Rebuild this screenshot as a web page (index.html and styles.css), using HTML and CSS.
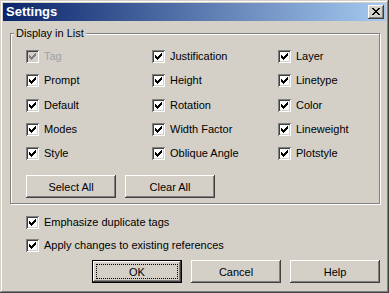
FILE: index.html
```html
<!DOCTYPE html>
<html>
<head>
<meta charset="utf-8">
<link rel="stylesheet" href="styles.css">
</head>
<body>
<div class="window">
  <div class="titlebar">
    <span class="title">Settings</span>
    <button class="close" aria-label="Close"><svg width="8" height="7" viewBox="0 0 8 7" shape-rendering="crispEdges"><path d="M0 0h2v1h-2zM6 0h2v1h-2zM1 1h2v1h-2zM5 1h2v1h-2zM2 2h4v1h-4zM3 3h2v1h-2zM2 4h4v1h-4zM1 5h2v1h-2zM5 5h2v1h-2zM0 6h2v1h-2zM6 6h2v1h-2z" fill="#000"/></svg></button>
  </div>
  <div class="body">
    <div class="group">
      <span class="legend">Display in List</span>
      <div class="grid">
        <label class="cb disabled"><span class="box"><svg class="chk" width="7" height="7" viewBox="0 0 7 7" shape-rendering="crispEdges"><path d="M0 2h1v3h-1zM1 3h1v3h-1zM2 4h1v3h-1zM3 3h1v3h-1zM4 2h1v3h-1zM5 1h1v3h-1zM6 0h1v3h-1z"/></svg></span>Tag</label>
        <label class="cb"><span class="box"><svg class="chk" width="7" height="7" viewBox="0 0 7 7" shape-rendering="crispEdges"><path d="M0 2h1v3h-1zM1 3h1v3h-1zM2 4h1v3h-1zM3 3h1v3h-1zM4 2h1v3h-1zM5 1h1v3h-1zM6 0h1v3h-1z"/></svg></span>Justification</label>
        <label class="cb"><span class="box"><svg class="chk" width="7" height="7" viewBox="0 0 7 7" shape-rendering="crispEdges"><path d="M0 2h1v3h-1zM1 3h1v3h-1zM2 4h1v3h-1zM3 3h1v3h-1zM4 2h1v3h-1zM5 1h1v3h-1zM6 0h1v3h-1z"/></svg></span>Layer</label>
        <label class="cb"><span class="box"><svg class="chk" width="7" height="7" viewBox="0 0 7 7" shape-rendering="crispEdges"><path d="M0 2h1v3h-1zM1 3h1v3h-1zM2 4h1v3h-1zM3 3h1v3h-1zM4 2h1v3h-1zM5 1h1v3h-1zM6 0h1v3h-1z"/></svg></span>Prompt</label>
        <label class="cb"><span class="box"><svg class="chk" width="7" height="7" viewBox="0 0 7 7" shape-rendering="crispEdges"><path d="M0 2h1v3h-1zM1 3h1v3h-1zM2 4h1v3h-1zM3 3h1v3h-1zM4 2h1v3h-1zM5 1h1v3h-1zM6 0h1v3h-1z"/></svg></span>Height</label>
        <label class="cb"><span class="box"><svg class="chk" width="7" height="7" viewBox="0 0 7 7" shape-rendering="crispEdges"><path d="M0 2h1v3h-1zM1 3h1v3h-1zM2 4h1v3h-1zM3 3h1v3h-1zM4 2h1v3h-1zM5 1h1v3h-1zM6 0h1v3h-1z"/></svg></span>Linetype</label>
        <label class="cb"><span class="box"><svg class="chk" width="7" height="7" viewBox="0 0 7 7" shape-rendering="crispEdges"><path d="M0 2h1v3h-1zM1 3h1v3h-1zM2 4h1v3h-1zM3 3h1v3h-1zM4 2h1v3h-1zM5 1h1v3h-1zM6 0h1v3h-1z"/></svg></span>Default</label>
        <label class="cb"><span class="box"><svg class="chk" width="7" height="7" viewBox="0 0 7 7" shape-rendering="crispEdges"><path d="M0 2h1v3h-1zM1 3h1v3h-1zM2 4h1v3h-1zM3 3h1v3h-1zM4 2h1v3h-1zM5 1h1v3h-1zM6 0h1v3h-1z"/></svg></span>Rotation</label>
        <label class="cb"><span class="box"><svg class="chk" width="7" height="7" viewBox="0 0 7 7" shape-rendering="crispEdges"><path d="M0 2h1v3h-1zM1 3h1v3h-1zM2 4h1v3h-1zM3 3h1v3h-1zM4 2h1v3h-1zM5 1h1v3h-1zM6 0h1v3h-1z"/></svg></span>Color</label>
        <label class="cb"><span class="box"><svg class="chk" width="7" height="7" viewBox="0 0 7 7" shape-rendering="crispEdges"><path d="M0 2h1v3h-1zM1 3h1v3h-1zM2 4h1v3h-1zM3 3h1v3h-1zM4 2h1v3h-1zM5 1h1v3h-1zM6 0h1v3h-1z"/></svg></span>Modes</label>
        <label class="cb"><span class="box"><svg class="chk" width="7" height="7" viewBox="0 0 7 7" shape-rendering="crispEdges"><path d="M0 2h1v3h-1zM1 3h1v3h-1zM2 4h1v3h-1zM3 3h1v3h-1zM4 2h1v3h-1zM5 1h1v3h-1zM6 0h1v3h-1z"/></svg></span>Width Factor</label>
        <label class="cb"><span class="box"><svg class="chk" width="7" height="7" viewBox="0 0 7 7" shape-rendering="crispEdges"><path d="M0 2h1v3h-1zM1 3h1v3h-1zM2 4h1v3h-1zM3 3h1v3h-1zM4 2h1v3h-1zM5 1h1v3h-1zM6 0h1v3h-1z"/></svg></span>Lineweight</label>
        <label class="cb"><span class="box"><svg class="chk" width="7" height="7" viewBox="0 0 7 7" shape-rendering="crispEdges"><path d="M0 2h1v3h-1zM1 3h1v3h-1zM2 4h1v3h-1zM3 3h1v3h-1zM4 2h1v3h-1zM5 1h1v3h-1zM6 0h1v3h-1z"/></svg></span>Style</label>
        <label class="cb"><span class="box"><svg class="chk" width="7" height="7" viewBox="0 0 7 7" shape-rendering="crispEdges"><path d="M0 2h1v3h-1zM1 3h1v3h-1zM2 4h1v3h-1zM3 3h1v3h-1zM4 2h1v3h-1zM5 1h1v3h-1zM6 0h1v3h-1z"/></svg></span>Oblique Angle</label>
        <label class="cb"><span class="box"><svg class="chk" width="7" height="7" viewBox="0 0 7 7" shape-rendering="crispEdges"><path d="M0 2h1v3h-1zM1 3h1v3h-1zM2 4h1v3h-1zM3 3h1v3h-1zM4 2h1v3h-1zM5 1h1v3h-1zM6 0h1v3h-1z"/></svg></span>Plotstyle</label>
      </div>
      <div class="group-buttons">
        <button class="btn">Select All</button>
        <button class="btn">Clear All</button>
      </div>
    </div>
    <div class="options">
      <label class="cb"><span class="box"><svg class="chk" width="7" height="7" viewBox="0 0 7 7" shape-rendering="crispEdges"><path d="M0 2h1v3h-1zM1 3h1v3h-1zM2 4h1v3h-1zM3 3h1v3h-1zM4 2h1v3h-1zM5 1h1v3h-1zM6 0h1v3h-1z"/></svg></span>Emphasize duplicate tags</label>
      <label class="cb"><span class="box"><svg class="chk" width="7" height="7" viewBox="0 0 7 7" shape-rendering="crispEdges"><path d="M0 2h1v3h-1zM1 3h1v3h-1zM2 4h1v3h-1zM3 3h1v3h-1zM4 2h1v3h-1zM5 1h1v3h-1zM6 0h1v3h-1z"/></svg></span>Apply changes to existing references</label>
    </div>
    <div class="footer">
      <button class="btn default">OK</button>
      <button class="btn">Cancel</button>
      <button class="btn">Help</button>
    </div>
  </div>
</div>
</body>
</html>
```

FILE: styles.css
```css
* { box-sizing: border-box; }
html, body { margin: 0; padding: 0; background: #d4d0c8; }
body {
  font-family: "Liberation Sans", Arial, sans-serif;
  font-size: 11px;
  color: #000;
}
.window {
  width: 389px;
  height: 293px;
  padding: 3px;
  background: #d4d0c8;
  box-shadow: inset -1px -1px #404040, inset 1px 1px #d4d0c8, inset -2px -2px #808080, inset 2px 2px #fff;
  display: flex;
  flex-direction: column;
}
.titlebar {
  height: 18px;
  background: linear-gradient(to right, #0a246a, #a6caf0);
  display: flex;
  align-items: center;
  justify-content: space-between;
  padding: 0 2px 0 3px;
}
.title {
  color: #fff;
  font-weight: bold;
  font-size: 13px;
  line-height: 18px;
}
.close {
  width: 16px;
  height: 14px;
  margin: 0;
  border: none;
  background: #d4d0c8;
  box-shadow: inset -1px -1px #404040, inset 1px 1px #fff, inset -2px -2px #808080, inset 2px 2px #d4d0c8;
  display: flex;
  align-items: flex-start;
  justify-content: flex-start;
  padding: 3px 0 0 4px;
}
.close svg { display: block; }
.body {
  flex: 1;
  padding: 12px 6px 0 7px;
  display: flex;
  flex-direction: column;
}
.group {
  position: relative;
  height: 171px;
  border: 1px solid #808080;
  box-shadow: inset 1px 1px #fff, 1px 1px #fff;
  padding: 16px 0 0 15px;
}
.legend {
  position: absolute;
  left: 3px;
  top: -8px;
  padding: 0 2px;
  line-height: 14px;
  background: #d4d0c8;
}
.grid {
  display: grid;
  grid-template-columns: 126px 126px 1fr;
  grid-auto-rows: 13px;
  row-gap: 11.33px;
}
.cb {
  display: flex;
  align-items: center;
  height: 13px;
  line-height: 13px;
  white-space: nowrap;
}
.box {
  flex: none;
  width: 13px;
  height: 13px;
  margin-right: 5px;
  background: #fff;
  box-shadow: inset 1px 1px #808080, inset -1px -1px #fff, inset 2px 2px #404040, inset -2px -2px #d4d0c8;
  display: flex;
  padding: 3px;
}
.chk { display: block; fill: #000; }
.disabled { color: #a0a0a0; }
.disabled .box { background: #d4d0c8; }
.disabled .chk { fill: #808080; }
.group-buttons {
  display: flex;
  gap: 9px;
  margin-top: 15px;
}
.btn {
  position: relative;
  width: 90px;
  height: 23px;
  padding: 0;
  margin: 0;
  border: none;
  font-family: "Liberation Sans", Arial, sans-serif;
  font-size: 11px;
  color: #000;
  background: #d4d0c8;
  box-shadow: inset -1px -1px #404040, inset 1px 1px #fff, inset -2px -2px #808080, inset 2px 2px #d4d0c8;
}
.options {
  display: flex;
  flex-direction: column;
  gap: 10px;
  margin: 12px 0 0 16px;
}
.footer {
  display: flex;
  justify-content: flex-end;
  gap: 9px;
  margin-top: 8px;
}
.btn.default {
  box-shadow: inset 0 0 0 1px #000, inset -2px -2px #404040, inset 2px 2px #fff, inset -3px -3px #808080;
}
.btn.default::after {
  content: "";
  position: absolute;
  left: 4px;
  top: 4px;
  right: 4px;
  bottom: 4px;
  border: 1px dotted #000;
}
```
